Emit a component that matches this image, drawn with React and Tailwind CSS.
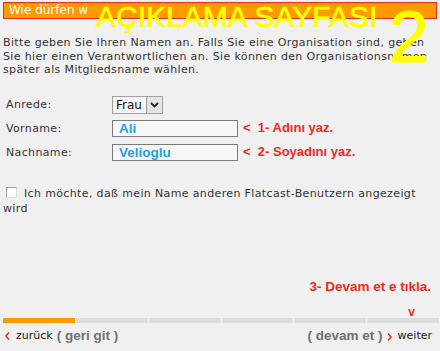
import React from "react";

const verdana = { fontFamily: '"DejaVu Sans", Verdana, sans-serif' };

function Chevron({ dir = "left" }) {
  return (
    <svg width="5" height="8" viewBox="0 0 5 8" className="inline-block">
      {dir === "left" ? (
        <path d="M4 0.5 L1 4 L4 7.5" stroke="#e8301e" strokeWidth="1.6" fill="none" />
      ) : (
        <path d="M1 0.5 L4 4 L1 7.5" stroke="#e8301e" strokeWidth="1.6" fill="none" />
      )}
    </svg>
  );
}

export default function App() {
  return (
    <div
      className="relative w-[440px] h-[351px] overflow-hidden bg-[#f0f0f0] text-[#333] flex flex-col"
      style={verdana}
    >
      {/* header bar */}
      <div className="mx-[3px] mt-[2px] h-[17px] bg-[#ff9900] border border-[#e8301e] text-white text-[12px] leading-[15px] pl-[5px]">
        Wie dürfen w
      </div>

      {/* overlay annotation title */}
      <div className="absolute left-[96px] top-[2px] text-[30px] leading-none text-[#ffff00] font-['Liberation_Sans',Arial,sans-serif] whitespace-nowrap [-webkit-text-stroke:0.6px_#ffff00]">
        AÇIKLAMA SAYFASI
      </div>
      <div className="absolute left-[389px] top-[1px] text-[72px] leading-none text-[#ffff00] font-['Liberation_Sans',Arial,sans-serif] [-webkit-text-stroke:1px_#ffff00]">
        2
      </div>

      {/* intro paragraph */}
      <p className="mt-[17px] pl-[3px] pr-[6px] text-[11px] leading-[13.5px] tracking-[0.36px]">
        Bitte geben Sie Ihren Namen an. Falls Sie eine Organisation sind, geben Sie hier einen Verantwortlichen an. Sie können den Organisationsnamen später als Mitgliedsname wählen.
      </p>

      {/* form */}
      <div className="mt-[19px] grid grid-cols-[106px_1fr] auto-rows-[24px] pl-[6px] text-[11px]">
        <div className="leading-[18px] tracking-[0.36px]">Anrede:</div>
        <div className="flex items-start">
          <div className="flex h-[18px] w-[51px] border border-[#a0a0a0] bg-[#f8f8f8]">
            <div className="flex-1 pl-[3px] text-[12px] leading-[16px] text-[#111]">Frau</div>
            <div className="w-[16px] h-[16px] bg-[#e4e4e4] border-l border-[#9a9a9a] flex items-center justify-center">
              <svg width="9" height="6" viewBox="0 0 9 6">
                <path d="M1 1 L4.5 4.5 L8 1" stroke="#222" strokeWidth="1.8" fill="none" />
              </svg>
            </div>
          </div>
        </div>

        <div className="leading-[18px] tracking-[0.36px]">Vorname:</div>
        <div className="flex items-start">
          <div className="w-[126px] h-[17px] border border-[#7a7a7a] bg-[#f7f7f7] pl-[6px] text-[13.5px] leading-[15px] font-bold text-[#1ba1e2] font-['Liberation_Sans',Arial,sans-serif]">
            Ali
          </div>
          <div className="ml-[5px] text-[13px] leading-[16px] font-bold text-[#ee2a1c] font-['Liberation_Sans',Arial,sans-serif] whitespace-pre">
            {"<  1- Adını yaz."}
          </div>
        </div>

        <div className="leading-[18px] tracking-[0.36px]">Nachname:</div>
        <div className="flex items-start">
          <div className="w-[126px] h-[17px] border border-[#7a7a7a] bg-[#f7f7f7] pl-[6px] text-[13.5px] leading-[15px] font-bold text-[#1ba1e2] font-['Liberation_Sans',Arial,sans-serif]">
            Velioglu
          </div>
          <div className="ml-[5px] text-[13px] leading-[16px] font-bold text-[#ee2a1c] font-['Liberation_Sans',Arial,sans-serif] whitespace-pre">
            {"<  2- Soyadını yaz."}
          </div>
        </div>
      </div>

      {/* checkbox */}
      <p className="mt-[18px] pl-[3px] pr-[6px] text-[11px] leading-[15px] tracking-[0.36px]">
        <span className="inline-block align-[-1px] ml-[3px] mr-[7px] w-[11px] h-[11px] border border-t-[#a0a0a0] border-l-[#a0a0a0] border-r-[#e0e0e0] border-b-[#e0e0e0] bg-white"></span>
        Ich möchte, daß mein Name anderen Flatcast-Benutzern angezeigt wird
      </p>

      {/* footer */}
      <div className="mt-auto">
        <div className="text-right pr-[9px] text-[13.5px] leading-[16px] font-bold text-[#ee2a1c] font-['Liberation_Sans',Arial,sans-serif]">
          3- Devam et e tıkla.
        </div>
        <div className="mt-[12px] h-[11px] flex justify-end pr-[25px] text-[12px] leading-[10px] font-bold text-[#ee2a1c] font-['Liberation_Sans',Arial,sans-serif]">
          v
        </div>
        <div className="ml-[3px] mr-[1px] grid grid-cols-6 gap-[1px] h-[5px]">
          <div className="bg-[#ff9900]" />
          <div className="bg-[#dddddd]" />
          <div className="bg-[#dddddd]" />
          <div className="bg-[#dddddd]" />
          <div className="bg-[#dddddd]" />
          <div className="bg-[#dddddd]" />
        </div>
        <div className="mt-[6px] mb-[8px] h-[14px] flex items-center justify-between pl-[5px] pr-[8px]">
          <div className="flex items-center">
            <Chevron dir="left" />
            <span className="ml-[6px] text-[11px] text-[#222]">zurück</span>
            <span className="ml-[4px] text-[13.5px] font-bold text-[#707070] font-['Liberation_Sans',Arial,sans-serif]">
              ( geri git )
            </span>
          </div>
          <div className="flex items-center">
            <span className="text-[13.5px] font-bold text-[#707070] font-['Liberation_Sans',Arial,sans-serif]">
              ( devam et )
            </span>
            <span className="ml-[4px]"><Chevron dir="right" /></span>
            <span className="ml-[6px] text-[11px] text-[#222]">weiter</span>
          </div>
        </div>
      </div>
    </div>
  );
}
